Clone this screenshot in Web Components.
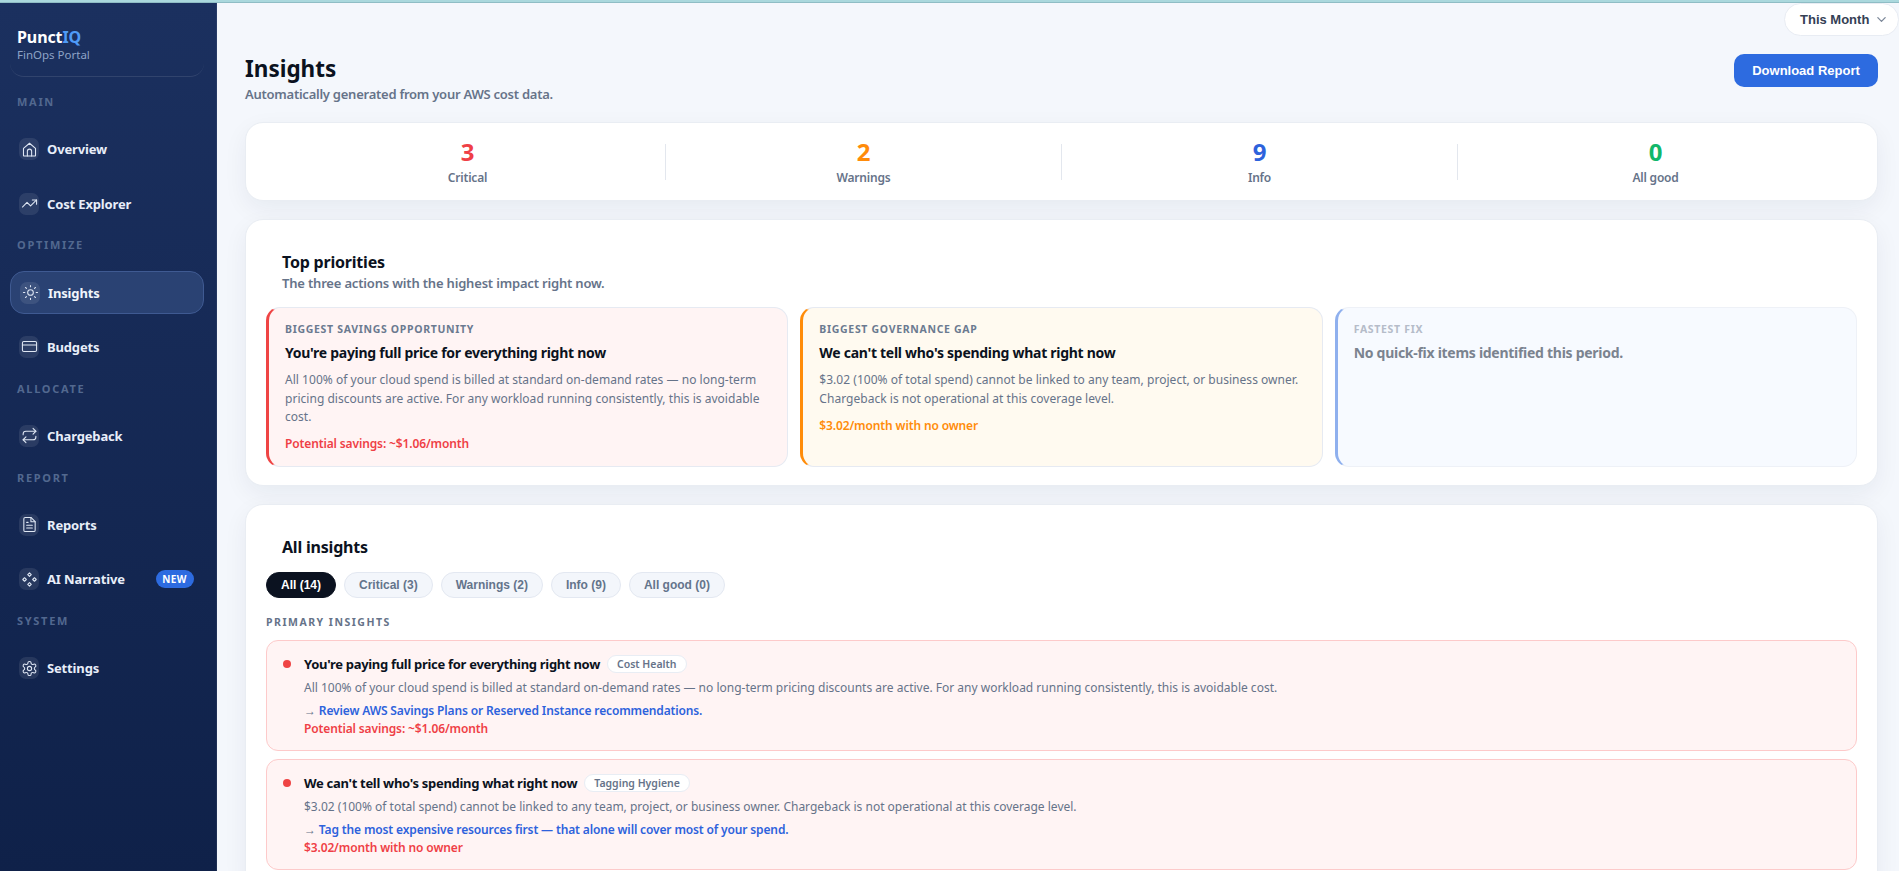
<!DOCTYPE html>
<html lang="en"><head><meta charset="utf-8"><title>Insights</title>
<style>
html,body{margin:0;height:100%;overflow:hidden;background:#f4f7fc;font-family:"Noto Sans","Liberation Sans",sans-serif}
</style></head><body>
<app-shell>
  <side-bar slot="side">
    <nav-section label="MAIN">
      <nav-item icon="home">Overview</nav-item>
      <nav-item icon="trend">Cost Explorer</nav-item>
    </nav-section>
    <nav-section label="OPTIMIZE">
      <nav-item icon="sun" active>Insights</nav-item>
      <nav-item icon="card">Budgets</nav-item>
    </nav-section>
    <nav-section label="ALLOCATE">
      <nav-item icon="repeat">Chargeback</nav-item>
    </nav-section>
    <nav-section label="REPORT">
      <nav-item icon="file">Reports</nav-item>
      <nav-item icon="spark" badge="NEW">AI Narrative</nav-item>
    </nav-section>
    <nav-section label="SYSTEM">
      <nav-item icon="gear">Settings</nav-item>
    </nav-section>
  </side-bar>
  <period-pill>This Month</period-pill>
  <main-content>
    <page-head></page-head>
    <stat-strip>
      <stat-item value="3" color="#ef3f46">Critical</stat-item>
      <stat-item value="2" color="#ff8c0a">Warnings</stat-item>
      <stat-item value="9" color="#2d62dc">Info</stat-item>
      <stat-item value="0" color="#12b76a">All good</stat-item>
    </stat-strip>
    <panel-card heading="Top priorities" sub="The three actions with the highest impact right now.">
      <priority-grid>
        <priority-card tone="red" label="BIGGEST SAVINGS OPPORTUNITY" title="You're paying full price for everything right now" foot="Potential savings: ~$1.06/month">All 100% of your cloud spend is billed at standard on-demand rates — no long-term pricing discounts are active. For any workload running consistently, this is avoidable cost.</priority-card>
        <priority-card tone="amber" label="BIGGEST GOVERNANCE GAP" title="We can't tell who's spending what right now" foot="$3.02/month with no owner">$3.02 (100% of total spend) cannot be linked to any team, project, or business owner. Chargeback is not operational at this coverage level.</priority-card>
        <priority-card tone="blue" label="FASTEST FIX" title="No quick-fix items identified this period."></priority-card>
      </priority-grid>
    </panel-card>
    <panel-card heading="All insights">
      <filter-bar>
        <filter-pill active>All (14)</filter-pill>
        <filter-pill>Critical (3)</filter-pill>
        <filter-pill>Warnings (2)</filter-pill>
        <filter-pill>Info (9)</filter-pill>
        <filter-pill>All good (0)</filter-pill>
      </filter-bar>
      <group-label>PRIMARY INSIGHTS</group-label>
      <insight-list>
        <insight-row title="You're paying full price for everything right now" chip="Cost Health" action="Review AWS Savings Plans or Reserved Instance recommendations." foot="Potential savings: ~$1.06/month">All 100% of your cloud spend is billed at standard on-demand rates — no long-term pricing discounts are active. For any workload running consistently, this is avoidable cost.</insight-row>
        <insight-row title="We can't tell who's spending what right now" chip="Tagging Hygiene" action="Tag the most expensive resources first — that alone will cover most of your spend." foot="$3.02/month with no owner">$3.02 (100% of total spend) cannot be linked to any team, project, or business owner. Chargeback is not operational at this coverage level.</insight-row>
      </insight-list>
    </panel-card>
  </main-content>
</app-shell>
<script>
const F='"Noto Sans","Liberation Sans",sans-serif';
function def(name,css,html){
  customElements.define(name,class extends HTMLElement{
    connectedCallback(){
      if(this.shadowRoot)return;
      const r=this.attachShadow({mode:'open'});
      r.innerHTML='<style>'+css+'</style>'+(typeof html==='function'?html(this):html);
    }
  });
}
const ICONS={
home:'<path d="M3.5 10.5 12 3.2l8.500 7.300V20.500a.8.8 0 0 1-.8.8H4.300a.8.8 0 0 1-.8-.8z"/><path d="M9 21v-6.500a3 3 0 0 1 6 0V21"/>',
trend:'<path d="M2 17l6.500-6.500 5 5L22 7"/><path d="M16 7h6v6"/>',
sun:'<circle cx="12" cy="12" r="4"/><path d="M12 2v2M12 20v2M4.900 4.900l1.400 1.400M17.700 17.700l1.400 1.400M2 12h2M20 12h2M6.300 17.700l-1.400 1.400M19.100 4.900l-1.400 1.400"/>',
card:'<rect x="2" y="5" width="20" height="14" rx="2"/><path d="M2 10h20"/>',
repeat:'<path d="m17 2 4 4-4 4"/><path d="M3 11v-1a4 4 0 0 1 4-4h14"/><path d="m7 22-4-4 4-4"/><path d="M21 13v1a4 4 0 0 1-4 4H3"/>',
file:'<path d="M14 2H6a2 2 0 0 0-2 2v16a2 2 0 0 0 2 2h12a2 2 0 0 0 2-2V8z"/><path d="M14 2v6h6M8 13h8M8 17h8M8 9h2"/>',
spark:'<path d="M12 2.500 14.500 5 12 7.500 9.500 5zM12 16.500 14.500 19 12 21.500 9.500 19zM5 9.500 7.500 12 5 14.500 2.500 12zM19 9.500 21.500 12 19 14.500 16.500 12z"/>',
gear:'<path d="M12.220 2h-.44a2 2 0 0 0-2 2v.18a2 2 0 0 1-1 1.730l-.43.25a2 2 0 0 1-2 0l-.15-.08a2 2 0 0 0-2.730.73l-.22.38a2 2 0 0 0 .73 2.730l.15.1a2 2 0 0 1 1 1.720v.51a2 2 0 0 1-1 1.740l-.15.09a2 2 0 0 0-.73 2.730l.22.38a2 2 0 0 0 2.730.73l.15-.08a2 2 0 0 1 2 0l.43.25a2 2 0 0 1 1 1.730V20a2 2 0 0 0 2 2h.44a2 2 0 0 0 2-2v-.18a2 2 0 0 1 1-1.730l.43-.25a2 2 0 0 1 2 0l.15.08a2 2 0 0 0 2.730-.73l.22-.39a2 2 0 0 0-.73-2.730l-.15-.08a2 2 0 0 1-1-1.740v-.5a2 2 0 0 1 1-1.740l.15-.09a2 2 0 0 0 .73-2.730l-.22-.38a2 2 0 0 0-2.730-.73l-.15.08a2 2 0 0 1-2 0l-.43-.25a2 2 0 0 1-1-1.730V4a2 2 0 0 0-2-2z"/><circle cx="12" cy="12" r="3"/>'
};
def('app-shell',`
:host{display:flex;flex-direction:column;height:100vh;overflow:hidden;background:#f4f7fc}
.strip{height:2px;flex:none;background:#aad8dd;border-bottom:1px solid #8fbdc5}
.row{flex:1;min-height:0;display:flex}
.side{flex:none;display:flex}
.main{flex:1;min-width:0;display:flex;flex-direction:column;overflow:hidden}
`,`<div class="strip"></div><div class="row"><div class="side"><slot name="side"></slot></div><div class="main"><slot></slot></div></div>`);
def('side-bar',`
:host{display:block;width:217px;box-sizing:border-box;height:100%;padding:0 12.500px 0 10px;background:linear-gradient(180deg,#1b305f 0%,#0f2149 100%);border-right:1px solid rgba(255,255,255,.06);color:#fff}
.brand{padding:24px 7px 14px;margin-bottom:18px;border-bottom:1px solid rgba(255,255,255,.1);border-radius:0 0 14px 14px}
.name{font:700 16px/20px ${F};letter-spacing:-.1px}
.name b{color:#4f9bf7;font-weight:700}
.tag{font:400 11.500px/15px ${F};color:#8ea3c6}
.nav{display:flex;flex-direction:column;gap:13.600px}
`,`<div class="brand"><div class="name">Punct<b>IQ</b></div><div class="tag">FinOps Portal</div></div><div class="nav"><slot></slot></div>`);
def('nav-section',`
:host{display:flex;flex-direction:column;gap:12px}
.l{font:700 11px/14px ${F};letter-spacing:1.700px;color:#52688f;padding-left:7px;margin-bottom:7px}
`,e=>`<div class="l">${e.getAttribute('label')}</div><slot></slot>`);
def('nav-item',`
:host{display:flex;align-items:center;height:42.400px;box-sizing:border-box;padding:0 10px 0 9px;gap:8px;border:1px solid transparent;border-left-width:0;border-right-width:0;border-radius:14px;color:#e8eef9;font:700 13px/18px ${F};letter-spacing:-.15px}
:host([active]){background:#2a4273;border:1px solid #3f5a92;padding:0 9px;color:#f1f5fc}
.i{flex:none;width:20px;height:22px;border-radius:7px;background:rgba(255,255,255,.09);display:grid;place-items:center}
svg{width:17px;height:17px;fill:none;stroke:#dfe7f4;stroke-width:1.500;stroke-linecap:round;stroke-linejoin:round}
.b{margin-left:auto;font:700 10px/18px ${F};letter-spacing:.4px;height:18px;width:38px;text-align:center;border-radius:9px;background:#2d6be0;color:#fff}
`,e=>`<span class="i"><svg viewBox="0 0 24 24">${ICONS[e.getAttribute('icon')]}</svg></span><span><slot></slot></span>${e.hasAttribute('badge')?`<span class="b">${e.getAttribute('badge')}</span>`:''}`);
def('period-pill',`
:host{display:flex;align-self:flex-end;align-items:center;gap:7px;box-sizing:border-box;height:33px;width:115px;padding:0 12px 0 15px;background:#fff;border:1px solid #e8ecf3;border-radius:17px;font:700 13px/16px "Liberation Sans",sans-serif;color:#344054;flex:none;white-space:nowrap}
svg{width:11px;height:11px;flex:none;fill:none;stroke:#7b8798;stroke-width:1.400;stroke-linecap:round;stroke-linejoin:round}
`,`<slot></slot><svg viewBox="0 0 12 12"><path d="M2 4l4 4 4-4"/></svg>`);
def('main-content',`
:host{display:flex;flex-direction:column;gap:18px;padding:18px 21px 0 28px;flex:none}
`,`<slot></slot>`);
def('page-head',`
:host{display:flex;justify-content:space-between;align-items:flex-start;height:50px;flex:none}
h1{margin:0;font:700 22.500px/30px ${F};color:#0b1220}
p{margin:1px 0 0;font:600 13px/18px ${F};color:#667389;letter-spacing:-.25px}
button{border:0;width:144px;height:33px;border-radius:10px;background:#2d6be0;color:#fff;font:700 13px/16px "Liberation Sans",sans-serif;padding:0}
`,`<div><h1>Insights</h1><p>Automatically generated from your AWS cost data.</p></div><button>Download Report</button>`);
def('stat-strip',`
:host{display:flex;flex:none;align-items:center;box-sizing:border-box;height:79px;padding:0 24px;background:#fff;border:1px solid #e9edf3;border-radius:18px;box-shadow:0 8px 24px rgba(15,33,73,.06)}
::slotted(stat-item:not(:last-child)){border-right:1px solid #e3e7ee}
`,`<slot></slot>`);
def('stat-item',`
:host{flex:1;display:block;height:36px;position:relative}
.w{position:absolute;left:0;right:0;top:-6px;text-align:center}
.n{font:700 24px/28px ${F}}
.t{font:600 12px/16px ${F};color:#667389;margin-top:4px;letter-spacing:-.2px}
`,e=>`<div class="w"><div class="n" style="color:${e.getAttribute('color')}">${e.getAttribute('value')}</div><div class="t"><slot></slot></div></div>`);
def('panel-card',`
:host{display:block;flex:none;box-sizing:border-box;background:#fff;border:1px solid #e9edf3;border-radius:18px;padding:32px 20px 18px;box-shadow:0 8px 24px rgba(15,33,73,.06)}
h2{margin:0;padding-left:16px;font:700 16px/20px ${F};color:#0b1220;letter-spacing:-.2px}
p{margin:2px 0 0;padding-left:16px;font:600 13px/18px ${F};color:#667389;letter-spacing:-.18px}
.b{margin-top:15px}
`,e=>`<h2>${e.getAttribute('heading')}</h2>${e.getAttribute('sub')?`<p>${e.getAttribute('sub')}</p>`:''}<div class="b"><slot></slot></div>`);
def('priority-grid',`:host{display:grid;grid-template-columns:repeat(3,1fr);gap:12px}`,`<slot></slot>`);
def('priority-card',`
:host{display:block;box-sizing:border-box;height:160px;padding:14px 16px 13px;border:1px solid #e6eaf2;border-left:3px solid var(--c);border-radius:14px;background:var(--bg)}
:host([tone=red]){--c:#ef4444;--bg:#fff4f4;--fc:#ef3f46}
:host([tone=amber]){--c:#ff8c0a;--bg:#fffaf0;--fc:#ff8c0a}
:host([tone=blue]){--c:#8fb0ee;--bg:#f7faff;border-color:#eef1f7;border-left-color:#8fb0ee}
.l{font:700 10.500px/14px ${F};letter-spacing:.68px;color:#6b7a90}
.h{font:700 14px/20px ${F};color:#0b1220;margin-top:7px;letter-spacing:-.28px}
.d{font:400 12px/18.600px ${F};color:#667389;margin-top:8px;letter-spacing:.03px}
.f{font:600 12px/18px ${F};color:var(--fc);margin-top:8.500px;letter-spacing:-.13px}
:host([tone=blue]) .l{color:#b5bcc9}
:host([tone=blue]) .h{color:#7b838f}
`,e=>`<div class="l">${e.getAttribute('label')}</div><div class="h">${e.getAttribute('title')}</div>${e.textContent.trim()?`<div class="d"><slot></slot></div>`:''}${e.getAttribute('foot')?`<div class="f">${e.getAttribute('foot')}</div>`:''}`);
def('filter-bar',`:host{display:flex;gap:8px;align-items:center}`,`<slot></slot>`);
def('filter-pill',`
:host{display:block;box-sizing:border-box;height:26px;padding:0 14px;border:1px solid #e3e8f1;border-radius:13px;background:#f3f6fb;color:#64748b;font:700 12px/24px "Liberation Sans",sans-serif}
:host([active]){background:#0b1220;border-color:#0b1220;color:#fff}
`,`<slot></slot>`);
def('group-label',`:host{display:block;margin:17px 0 11px;font:700 10.500px/14px ${F};letter-spacing:1.500px;color:#667389}`,`<slot></slot>`);
def('insight-list',`:host{display:flex;flex-direction:column;gap:8px}`,`<slot></slot>`);
def('insight-row',`
:host{display:grid;grid-template-columns:8px 1fr;column-gap:13px;box-sizing:border-box;height:111px;padding:13px 16px 12px;border:1px solid #fdcaca;border-radius:12px;background:#fff4f4}
.dot{width:8px;height:8px;border-radius:50%;background:#ef4444;margin-top:6px}
.t{display:flex;align-items:center;gap:7px;height:20px}
.h{font:700 13px/20px ${F};color:#0b1220;letter-spacing:-.3px}
.c{font:600 10.500px/16px ${F};height:16px;padding:0 9px;border:1px solid #e8edf4;border-radius:9px;background:#fff;color:#667389}
.d{font:400 12px/18px ${F};color:#667389;margin-top:5px}
.a{font:600 12px/18px ${F};color:#2d62dc;margin-top:5px;letter-spacing:-.14px}
.a i{font-style:normal;font-weight:400;color:#667389}
.f{font:600 12px/18px ${F};color:#ef3f46;letter-spacing:-.13px}
`,e=>`<span class="dot"></span><div><div class="t"><span class="h">${e.getAttribute('title')}</span><span class="c">${e.getAttribute('chip')}</span></div><div class="d"><slot></slot></div><div class="a"><i>→</i> ${e.getAttribute('action')}</div><div class="f">${e.getAttribute('foot')}</div></div>`);
</script>
</body></html>
